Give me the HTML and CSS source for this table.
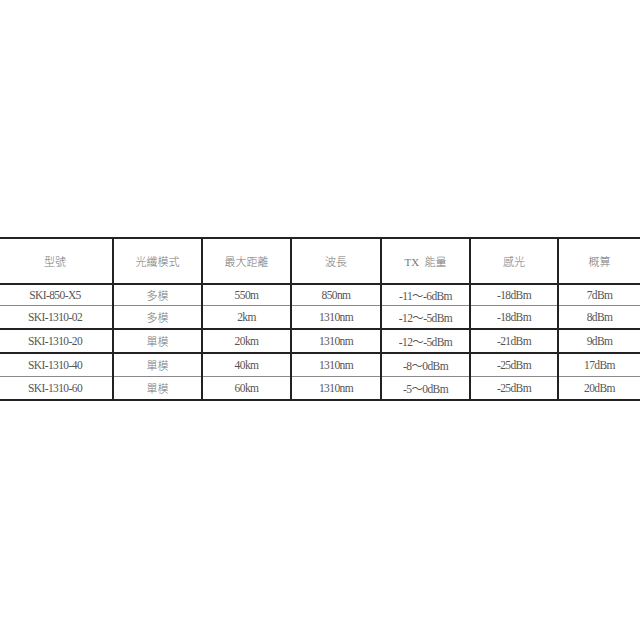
FILE: index.html
```html
<!DOCTYPE html>
<html lang="zh-Hant">
<head>
<meta charset="utf-8">
<title>光纖模組規格</title>
<link rel="stylesheet" href="styles.css">
</head>
<body>
<main class="page">
  <table class="spec">
    <colgroup>
      <col class="c1"><col class="c2"><col class="c3"><col class="c4"><col class="c5"><col class="c6"><col class="c7">
    </colgroup>
    <thead>
      <tr>
        <th>型號</th><th>光纖模式</th><th>最大距離</th><th>波長</th><th>TX&nbsp;&nbsp;能量</th><th>感光</th><th>概算</th>
      </tr>
    </thead>
    <tbody>
      <tr class="light first">
        <td>SKI-850-X5</td><td class="zh">多模</td><td>550m</td><td>850nm</td><td>-11～-6dBm</td><td>-18dBm</td><td>7dBm</td>
      </tr>
      <tr class="dark">
        <td>SKI-1310-02</td><td class="zh">多模</td><td>2km</td><td>1310nm</td><td>-12～-5dBm</td><td>-18dBm</td><td>8dBm</td>
      </tr>
      <tr class="dark">
        <td>SKI-1310-20</td><td class="zh">單模</td><td>20km</td><td>1310nm</td><td>-12～-5dBm</td><td>-21dBm</td><td>9dBm</td>
      </tr>
      <tr class="light">
        <td>SKI-1310-40</td><td class="zh">單模</td><td>40km</td><td>1310nm</td><td>-8～0dBm</td><td>-25dBm</td><td>17dBm</td>
      </tr>
      <tr class="last">
        <td>SKI-1310-60</td><td class="zh">單模</td><td>60km</td><td>1310nm</td><td>-5～0dBm</td><td>-25dBm</td><td>20dBm</td>
      </tr>
    </tbody>
  </table>
</main>
</body>
</html>
```
FILE: styles.css
```css
html, body {
  margin: 0;
  padding: 0;
  background: #fff;
}
.page {
  height: 640px;
  display: flex;
  flex-direction: column;
  justify-content: flex-start;
  padding-top: 237px;
  box-sizing: border-box;
  overflow: hidden;
}
.spec {
  border-collapse: collapse;
  table-layout: fixed;
  width: 644px;
  margin-left: -4px;
  font-family: "Liberation Serif", "Noto Sans CJK TC", serif;
  color: #555;
  font-size: 11.5px;
}
.c1 { width: 116px; }
.c2 { width: 89px; }
.c3 { width: 89px; }
.c4 { width: 90px; }
.c5 { width: 89px; }
.c6 { width: 88px; }
.c7 { width: 83px; }
.spec th,
.spec td {
  border-left: 2px solid #222;
  border-right: 2px solid #222;
  text-align: center;
  padding: 0;
  letter-spacing: -0.6px;
  white-space: nowrap;
}
.spec th {
  height: 44px;
  font-weight: 300;
  font-size: 11px;
  letter-spacing: 0;
  border-top: 2px solid #222;
  border-bottom: 2px solid #222;
  color: #777;
}
.spec td {
  height: 22px;
}
.spec tr.first td {
  height: 20px;
}
.spec td.zh {
  font-size: 11px;
  font-weight: 300;
  letter-spacing: 0;
  color: #777;
}
.spec tr.light td {
  border-bottom: 1px solid #8a8a8a;
}
.spec tr.dark td {
  border-bottom: 2px solid #222;
}
.spec tr.last td {
  border-bottom: 2px solid #222;
}
```
